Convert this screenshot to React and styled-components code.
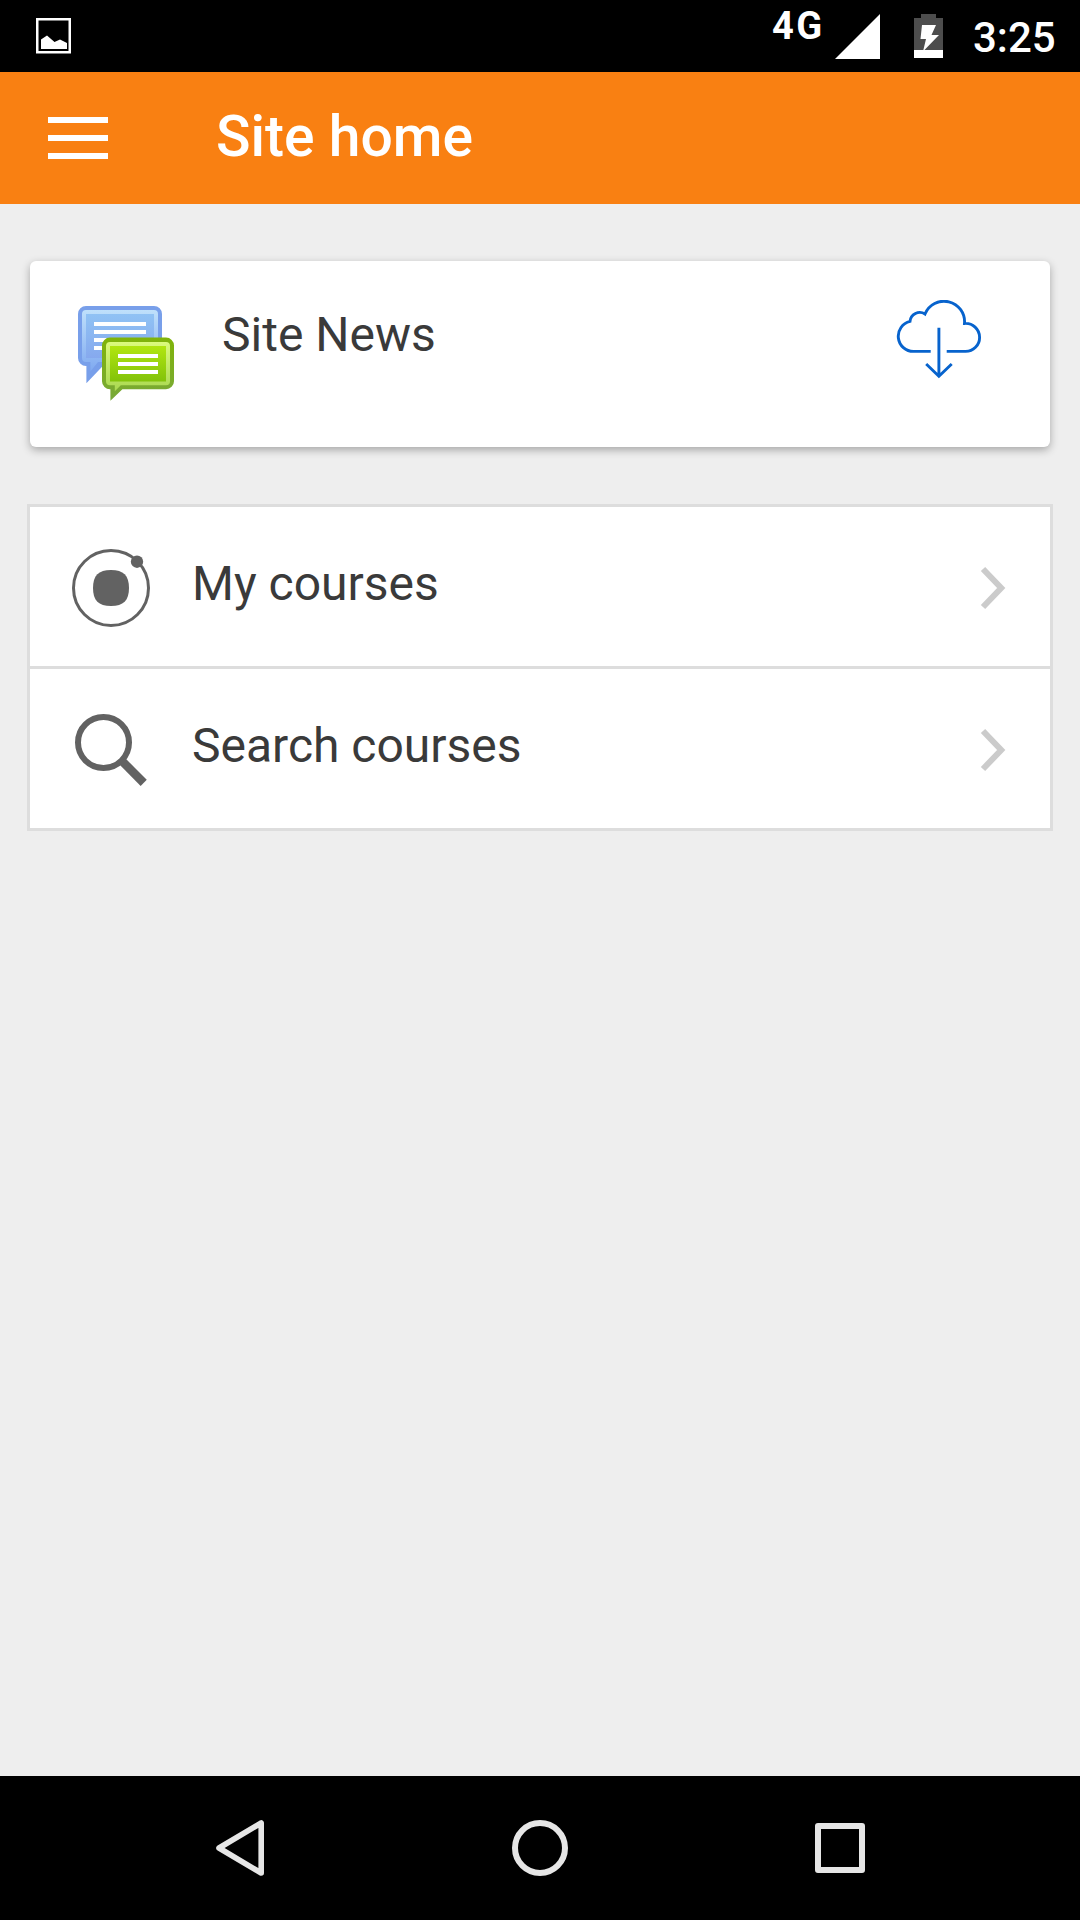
import React from "react";
import styled, { createGlobalStyle } from "styled-components";

const GlobalStyle = createGlobalStyle`
  *, *::before, *::after { box-sizing: border-box; }
  body {
    margin: 0;
    background: #eeeeee;
    font-family: Roboto, "Liberation Sans", sans-serif;
  }
  svg { display: block; flex: none; }
`;

const Screen = styled.div`
  display: flex;
  flex-direction: column;
  width: 1080px;
  height: 1920px;
  background: #eeeeee;
  overflow: hidden;
`;

const StatusBar = styled.div`
  display: flex;
  align-items: flex-start;
  justify-content: space-between;
  height: 72px;
  padding: 0 23px 0 36px;
  background: #000;
  color: #fff;
`;

const Notifications = styled.div`
  padding-top: 18px;
`;

const StatusIcons = styled.div`
  display: flex;
  align-items: flex-start;
`;

const Network = styled.span`
  width: 63px;
  padding-top: 4px;
  font-size: 38px;
  line-height: 44px;
  font-weight: 700;
  letter-spacing: 2.4px;
`;

const StatusGlyph = styled.div`
  padding-top: 14px;
  margin-right: ${(p) => p.$gap}px;
`;

const Clock = styled.span`
  width: 84px;
  padding-top: 13px;
  font-size: 42px;
  line-height: 50px;
  font-weight: 500;
  white-space: nowrap;
`;

const AppBar = styled.header`
  display: flex;
  align-items: flex-start;
  height: 132px;
  padding-left: 48px;
  background: #f98012;
`;

const MenuButton = styled.button`
  display: flex;
  flex-direction: column;
  gap: 12px;
  width: 60px;
  margin: 45px 108px 0 0;
  padding: 0;
  border: 0;
  background: none;
`;

const MenuLine = styled.span`
  height: 6px;
  background: #fff;
`;

const Title = styled.h1`
  margin: 0;
  padding-top: 31px;
  font-size: 57px;
  line-height: 68px;
  font-weight: 500;
  color: #fff;
`;

const Content = styled.main`
  display: flex;
  flex-direction: column;
  flex: 1;
  gap: 57px;
  padding: 57px 27px 0;
`;

const Card = styled.section`
  display: flex;
  align-items: flex-start;
  height: 186px;
  margin: 0 3px;
  padding: 39px 68px 0 48px;
  border-radius: 6px;
  background: #fff;
  box-shadow: 0 3px 9px rgba(0, 0, 0, 0.3);
`;

const Label = styled.span`
  flex: 1;
  padding-top: ${(p) => p.$top || 0}px;
  font-size: 48px;
  line-height: 56px;
  color: #3a3a3a;
`;

const IconSlot = styled.div`
  width: ${(p) => p.$width}px;
  padding-top: ${(p) => p.$top || 0}px;
`;

const List = styled.ul`
  margin: 0;
  padding: 0;
  list-style: none;
  border: 3px solid #dddddd;
  background: #fff;
`;

const Row = styled.li`
  display: flex;
  align-items: flex-start;
  height: 159px;
  padding: 0 38px 0 42px;

  & + & {
    height: 162px;
    border-top: 3px solid #dddddd;
  }
`;

const NavBar = styled.nav`
  display: flex;
  justify-content: center;
  gap: 240px;
  height: 144px;
  padding-top: 42px;
  background: #000;
`;

function PictureIcon() {
  return (
    <svg width="35" height="36" viewBox="0 0 35 36">
      <rect x="1.25" y="1.25" width="32.500" height="33" fill="none" stroke="#fff" strokeWidth="2.5" />
      <path d="M5 21.500 11 17.500 18.500 24 24 21.500 31 25V31H5Z" fill="#fff" />
    </svg>
  );
}

function SignalIcon() {
  return (
    <svg width="45" height="45" viewBox="0 0 45 45">
      <path d="M45 0V45H0Z" fill="#fff" />
    </svg>
  );
}

function BatteryIcon() {
  return (
    <svg width="29" height="44" viewBox="0 0 29 44">
      <path d="M7 0H22V4H29V36H0V4H7Z" fill="#4d4d4d" />
      <path d="M0 36H29V44H0Z" fill="#fff" />
      <path d="M8 11H22L17.500 21H25L9 37.500 12 25H6.500Z" fill="#fff" />
    </svg>
  );
}

function ForumIcon() {
  return (
    <svg width="96" height="96" viewBox="0 0 24 24">
      <defs>
        <linearGradient id="blueRim" x1="0" y1="0" x2="0" y2="1">
          <stop offset="0" stopColor="#bfe0fb" />
          <stop offset="1" stopColor="#7fa9f0" />
        </linearGradient>
        <linearGradient id="blueFill" x1="0" y1="0" x2="0" y2="1">
          <stop offset="0" stopColor="#90c2f4" />
          <stop offset="1" stopColor="#86a9ee" />
        </linearGradient>
        <linearGradient id="greenEdge" x1="0" y1="0" x2="0" y2="1">
          <stop offset="0" stopColor="#80b408" />
          <stop offset="1" stopColor="#78a83a" />
        </linearGradient>
        <linearGradient id="greenRim" x1="0" y1="0" x2="0" y2="1">
          <stop offset="0" stopColor="#dbfa7c" />
          <stop offset="1" stopColor="#a9d850" />
        </linearGradient>
        <linearGradient id="greenFill" x1="0" y1="0" x2="0" y2="1">
          <stop offset="0" stopColor="#b1e610" />
          <stop offset="1" stopColor="#82c20a" />
        </linearGradient>
      </defs>
      <path d="M2 0H19A2 2 0 0 1 21 2V13A2 2 0 0 1 19 15H6.200L2.100 19.300V15A2 2 0 0 1 0 13V2A2 2 0 0 1 2 0Z" fill="#789fea" />
      <path d="M2 1H19A1 1 0 0 1 20 2V13A1 1 0 0 1 19 14H5L3.100 16.400V14H2A1 1 0 0 1 1 13V2A1 1 0 0 1 2 1Z" fill="url(#blueRim)" />
      <path d="M2 2H19V13H2Z" fill="url(#blueFill)" />
      <path d="M4 4H17V5H4ZM4 6H17V7H4ZM4 8H17V9H4ZM4 10H17V11H4Z" fill="#fff" />
      <path d="M8 7.900H22A2 2 0 0 1 24 9.900V18.800A2 2 0 0 1 22 20.800H11.100L8.100 23.700V20.800A2 2 0 0 1 6 18.800V9.900A2 2 0 0 1 8 7.900Z" fill="url(#greenEdge)" />
      <path d="M8 9H22A1 1 0 0 1 23 10V18.800A1 1 0 0 1 22 19.800H10.700L9.200 21.300V19.800H8A1 1 0 0 1 7 18.800V10A1 1 0 0 1 8 9Z" fill="url(#greenRim)" />
      <path d="M8 10H22V18.900H8Z" fill="url(#greenFill)" />
      <path d="M10 12H20V13H10ZM10 14H20V15H10ZM10 16H20V17H10Z" fill="#fff" />
    </svg>
  );
}

function CloudDownloadIcon() {
  return (
    <svg width="86" height="82" viewBox="6 10 86 82" fill="none" stroke="#0763cd" strokeWidth="2.9">
      <path d="M40.700 61.400H23.500A15.200 15.200 0 0 1 20 31.400A9.800 9.800 0 0 1 35 24A20.550 20.550 0 0 1 74.500 33.450A14 14 0 0 1 89.600 47.400A14 14 0 0 1 75.600 61.400H56.700" />
      <path d="M48.900 37.700V86M36.200 74 48.900 86.200 61.700 74" />
    </svg>
  );
}

function CoursesIcon() {
  return (
    <svg width="78" height="78" viewBox="0 0 78 78">
      <circle cx="39" cy="39" r="37.500" fill="none" stroke="#626262" strokeWidth="3" />
      <circle cx="65" cy="12.700" r="6.200" fill="#626262" />
      <path d="M39 21C51.500 21 57 26.500 57 39S51.500 57 39 57 21 51.500 21 39 26.500 21 39 21Z" fill="#626262" />
    </svg>
  );
}

function SearchIcon() {
  return (
    <svg width="78" height="78" viewBox="0 0 78 78" fill="none" stroke="#626262">
      <circle cx="31.500" cy="31.500" r="25.500" strokeWidth="6" />
      <path d="M50 50 71.700 71.900" strokeWidth="8.600" />
    </svg>
  );
}

function ChevronIcon() {
  return (
    <svg width="27" height="44" viewBox="0 0 27 44">
      <path d="M4 3 22.200 22 4 41" fill="none" stroke="#cbcbcb" strokeWidth="6" />
    </svg>
  );
}

function BackIcon() {
  return (
    <svg width="60" height="60" viewBox="0 0 60 60">
      <path d="M51.200 5V55L9 30Z" fill="none" stroke="#e6e6e6" strokeWidth="5.600" strokeLinejoin="round" />
    </svg>
  );
}

function HomeIcon() {
  return (
    <svg width="60" height="60" viewBox="0 0 60 60">
      <circle cx="30" cy="30" r="25" fill="none" stroke="#e6e6e6" strokeWidth="6" />
    </svg>
  );
}

function RecentIcon() {
  return (
    <svg width="60" height="60" viewBox="0 0 60 60">
      <rect x="8" y="8" width="44" height="44" fill="none" stroke="#e6e6e6" strokeWidth="6" strokeLinejoin="round" />
    </svg>
  );
}

const rows = [
  { label: "My courses", Icon: CoursesIcon },
  { label: "Search courses", Icon: SearchIcon },
];

export default function App() {
  return (
    <>
      <GlobalStyle />
      <Screen>
        <StatusBar>
          <Notifications>
            <PictureIcon />
          </Notifications>
          <StatusIcons>
            <Network>4G</Network>
            <StatusGlyph $gap={34}>
              <SignalIcon />
            </StatusGlyph>
            <StatusGlyph $gap={30}>
              <BatteryIcon />
            </StatusGlyph>
            <Clock>3:25</Clock>
          </StatusIcons>
        </StatusBar>
        <AppBar>
          <MenuButton aria-label="Menu">
            <MenuLine />
            <MenuLine />
            <MenuLine />
          </MenuButton>
          <Title>Site home</Title>
        </AppBar>
        <Content>
          <Card>
            <IconSlot $width={144} $top={6}>
              <ForumIcon />
            </IconSlot>
            <Label $top={7}>Site News</Label>
            <CloudDownloadIcon />
          </Card>
          <List>
            {rows.map(({ label, Icon }) => (
              <Row key={label}>
                <IconSlot $width={120} $top={42}>
                  <Icon />
                </IconSlot>
                <Label $top={49}>{label}</Label>
                <IconSlot $width={33} $top={59}>
                  <ChevronIcon />
                </IconSlot>
              </Row>
            ))}
          </List>
        </Content>
        <NavBar>
          <BackIcon />
          <HomeIcon />
          <RecentIcon />
        </NavBar>
      </Screen>
    </>
  );
}
